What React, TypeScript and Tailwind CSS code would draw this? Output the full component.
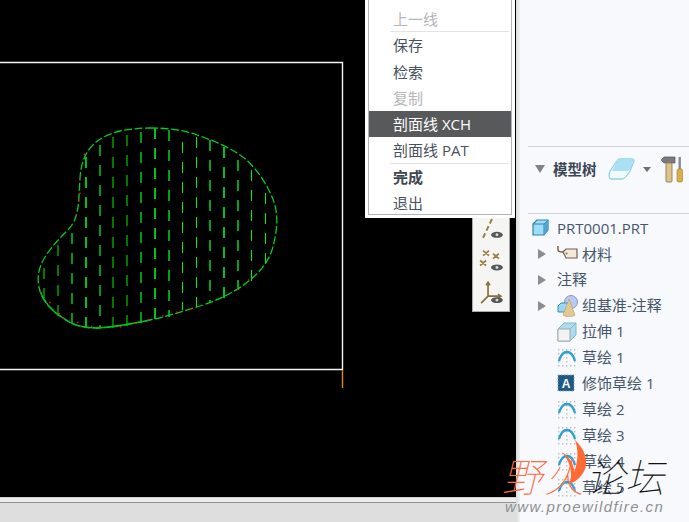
import React from "react";

const cjk = "font-['Open_Sans','Noto_Sans_CJK_SC','Liberation_Sans',sans-serif]";
const cjkOnly = "font-['Noto_Sans_CJK_SC','Liberation_Sans',sans-serif]";

const outline =
  "M150 128 C168 128 183 130 197 135 C212 140 227 146 240 155 C255 165 268 185 274 202 C278 214 278 230 272 250 C268 262 260 272 250 280 C236 292 216 301 197 307 C180 312 165 317 150 320 C135 323 118 327 97 328 C82 328 72 325 63 318 C52 311 44 303 40 291 C37 281 37 270 45 257 C50 249 56 242 63 235 C69 229 74 224 76 216 C79 207 79 195 80 178 C81 165 84 155 91 147 C98 139 108 134 120 131 C130 129 140 128 150 128 Z";

const hatch: [number, number, number, number, string][] = [
  [44, 268, 298, 1, "#00f000"],
  [58, 245, 317, 1, "#00f000"],
  [72, 233, 323, 1.4, "#00d820"],
  [86, 157, 328, 2, "#00c020"],
  [100, 145, 328, 1.5, "#00c820"],
  [113, 137, 328, 1, "#00f000"],
  [127, 135, 326, 1, "#00f000"],
  [141, 132, 324, 1.4, "#00d820"],
  [155, 128, 320, 2, "#00c020"],
  [169, 130, 317, 1.6, "#00c820"],
  [182.5, 142, 310, 1, "#00f000"],
  [196.5, 137, 307, 1, "#00f000"],
  [210, 140, 303, 1.6, "#00c820"],
  [224, 147, 298, 2, "#00c020"],
  [238, 160, 290, 1.6, "#00c820"],
  [251.5, 170, 283, 1, "#00f000"],
  [265.5, 193, 270, 1, "#00f000"],
];

function Drawing() {
  return (
    <svg width="516" height="497" viewBox="0 0 516 497" className="block">
      <path d="M0 62.5H342.5V369.5H0" fill="none" stroke="#f4f4f4" strokeWidth="1.4" />
      <path d="M342.5 370V388" stroke="#d98a00" strokeWidth="1.4" />
      {hatch.map(([x, a, b, w, c]) => (
        <line key={x} x1={x} x2={x} y1={a} y2={b} stroke={c} strokeWidth={w} strokeDasharray="11 9" />
      ))}
      <path d={outline} fill="none" stroke="#00d020" strokeWidth="1.3" strokeDasharray="8 2.5" />
      <path
        d="M150 320 C135 323 118 327 97 328 C82 328 72 325 63 318 C52 311 44 303 40 291"
        fill="none"
        stroke="#00c020"
        strokeWidth="1.4"
      />
      <path
        d="M80 178 L80 200 M40 291 L63 318 M76 216 L79 200 M84 155 L86 152 M63 318 L97 328 M120 327 L197 307 M237 290 L258 272"
        fill="none"
        stroke="#ff1010"
        strokeWidth="1.4"
        strokeDasharray="1.5 13"
      />
    </svg>
  );
}

function MenuRow({
  label,
  tone = "normal",
  sep = false,
}: {
  label: string;
  tone?: "normal" | "off" | "on" | "bold";
  sep?: boolean;
}) {
  const cls =
    tone === "on"
      ? "bg-[#58595b] text-white"
      : tone === "off"
        ? "text-[#b4b6b8]"
        : tone === "bold"
          ? "text-[#3d4650] font-bold"
          : "text-[#47525e]";
  return (
    <div>
      <div className={`h-[26.3px] pl-[24px] text-[15px] leading-[26px] ${cls}`}>{label}</div>
      {sep && <div className="h-px ml-[21px] mr-[2px] bg-[#e3e3e3] -mt-px relative" />}
    </div>
  );
}

function Menu() {
  return (
    <div className={`absolute left-[365px] -top-[2px] w-[150px] h-[220px] bg-white px-[3px] pb-[3px] ${cjk}`}>
      <div className="h-full border-x border-b border-[#b2b5b7] pt-[8px]">
        <MenuRow label="上一线" tone="off" sep />
        <MenuRow label="保存" />
        <MenuRow label="检索" />
        <MenuRow label="复制" tone="off" />
        <MenuRow label="剖面线 XCH" tone="on" />
        <MenuRow label="剖面线 PAT" sep />
        <MenuRow label="完成" tone="bold" />
        <MenuRow label="退出" />
      </div>
    </div>
  );
}

function Eye({ x, y }: { x: number; y: number }) {
  return (
    <g transform={`translate(${x} ${y})`}>
      <ellipse cx="6" cy="3" rx="6" ry="3" fill="#55585a" />
      <circle cx="6" cy="3" r="1.5" fill="#d8d8d8" />
    </g>
  );
}

function SideTools() {
  return (
    <div className="absolute left-[472px] top-[218px] w-[38px] h-[94px] bg-[#f5f6f4] border-x border-b border-[#a8aaab] flex flex-col items-center">
      <svg width="36" height="94" viewBox="0 0 36 94">
        <path d="M19 1 L9 22" stroke="#9a7f45" strokeWidth="2" strokeDasharray="5 3" />
        <Eye x={18} y={14} />
        <g stroke="#9a7f45" strokeWidth="1.8">
          <path d="M10 33l6 5M16 33l-6 5M20 36l6 5M26 36l-6 5M7 43l6 5M13 43l-6 5" />
        </g>
        <Eye x={18} y={47} />
        <g fill="none" stroke="#8a7038" strokeWidth="1.7">
          <path d="M15 66V79M15 79L27 79M15 79L8 86" />
          <path d="M13 68l2-3 2 3M25 77l3 2-3 2" />
        </g>
        <Eye x={18} y={80} />
      </svg>
    </div>
  );
}

function Cube() {
  return (
    <svg width="17" height="17" viewBox="0 0 17 17">
      <path d="M1 5 L5 1 H16 V11 L12 16 H1 Z" fill="#9fdcf5" stroke="#2e83b0" strokeWidth="1.2" />
      <path d="M1 5H12V16M12 5L16 1" fill="none" stroke="#2e83b0" strokeWidth="1" />
      <path d="M12 5L16 1V11L12 16Z" fill="#4ea6d0" />
    </svg>
  );
}

function Sketch() {
  return (
    <svg width="20" height="20" viewBox="0 0 20 20">
      <g fill="#bfc3c6">
        {[1, 5, 9, 13, 17].map((x) =>
          [2, 18].map((y) => <rect key={`${x}-${y}`} x={x} y={y} width="1.5" height="1.5" />),
        )}
        {[6, 10, 14].map((y) => (
          <React.Fragment key={y}>
            <rect x="1" y={y} width="1.5" height="1.5" />
            <rect x="9" y={y} width="1.5" height="1.5" />
            <rect x="17" y={y} width="1.5" height="1.5" />
          </React.Fragment>
        ))}
      </g>
      <path d="M2 14 C4 7 7 5 10 5 C13 5 16 7 18 14" fill="none" stroke="#2f9fd0" strokeWidth="2.4" />
    </svg>
  );
}

const icons: Record<string, React.ReactNode> = {
  cube: <Cube />,
  tag: (
    <svg width="21" height="16" viewBox="0 0 21 16">
      <path d="M1 0V4C1 6 3 6 6 6" fill="none" stroke="#7b5a25" strokeWidth="1.4" />
      <path d="M6 6 L9 3 H20 V12 H9 Z" fill="#f2e9dc" stroke="#6e5f58" strokeWidth="1.2" />
      <circle cx="9.5" cy="7.5" r="1" fill="#8a6a3a" />
    </svg>
  ),
  datum: (
    <svg width="22" height="22" viewBox="0 0 22 22">
      <circle cx="14" cy="7" r="6.5" fill="#b9c9ee" stroke="#8397c8" />
      <path d="M1 11 L4 8 H13 V17 H1 Z" fill="#9bd6f2" stroke="#3a8cba" />
      <path d="M12 4 L18 20 C15 22 8 22 6 20 Z" fill="#e3c894" stroke="#b79a62" strokeWidth="0.6" />
    </svg>
  ),
  extrude: (
    <svg width="20" height="20" viewBox="0 0 20 20">
      <path d="M1 7 L7 1 H19 V13 L13 19 H1 Z" fill="#a9dcef" stroke="#8cb6c6" />
      <path d="M1 7H13V19H1Z" fill="#f3f3f3" stroke="#a2a6a8" />
      <path d="M13 7L19 1" stroke="#8cb6c6" />
    </svg>
  ),
  sketch: <Sketch />,
  cosmetic: (
    <svg width="18" height="18" viewBox="0 0 18 18">
      <rect x="1" y="1" width="16" height="16" fill="#1f5a85" />
      <path d="M1 1h16v16H1z" fill="none" stroke="#7fa6c0" strokeDasharray="1.5 1.5" />
      <text x="9" y="14" textAnchor="middle" fontSize="12" fontWeight="700" fill="#fff" fontFamily="Liberation Sans">
        A
      </text>
    </svg>
  ),
};

function Arrow() {
  return <span className="w-0 h-0 border-y-[5px] border-y-transparent border-l-[8px] border-l-[#8b8d90]" />;
}

function Row({ label, icon, arrow, root }: { label: string; icon: string; arrow?: boolean; root?: boolean }) {
  return (
    <div className={`h-[25.9px] flex items-center text-[15px] whitespace-nowrap text-[#46566a] ${root ? "pl-[4px]" : "pl-[10px]"}`}>
      {!root && <span className="w-[19px] flex items-center">{arrow && <Arrow />}</span>}
      {icon && <span className="w-[25px] flex items-center">{icons[icon]}</span>}
      <span>{label}</span>
    </div>
  );
}

function Tree() {
  return (
    <div className={`pt-[1px] ${cjk}`}>
      <Row root label="PRT0001.PRT" icon="cube" />
      <Row label="材料" icon="tag" arrow />
      <Row label="注释" icon="" arrow />
      <Row label="组基准-注释" icon="datum" arrow />
      <Row label="拉伸 1" icon="extrude" />
      <Row label="草绘 1" icon="sketch" />
      <Row label="修饰草绘 1" icon="cosmetic" />
      <Row label="草绘 2" icon="sketch" />
      <Row label="草绘 3" icon="sketch" />
      <Row label="草绘 4" icon="sketch" />
      <Row label="草绘 5" icon="sketch" />
    </div>
  );
}

function Header() {
  return (
    <div className="h-[67px] flex items-center pb-[22px] pl-[7px] border-b border-[#d3d7da]">
      <span className="w-0 h-0 border-x-[5.5px] border-x-transparent border-t-[8px] border-t-[#818386]" />
      <span className={`ml-[8px] text-[14.5px] font-bold text-[#3b4654] ${cjkOnly}`}>模型树</span>
      <svg width="27" height="23" viewBox="0 0 27 23" className="ml-[11px]">
        <path d="M2 13 L9 3 Q10 1 12 1 H24 Q26 1 26 3 L22 13 Q17 21 14 21 H4 Q1 21 1 17 Z" fill="#f0fafd" stroke="#93d2e6" strokeWidth="1.3" />
        <path d="M9 3 Q10 1 12 1 H24 Q26 1 26 3 L22 11 Q21 13 19 13 H4 Z" fill="#a9e0f4" />
      </svg>
      <span className="ml-[8px] w-0 h-0 border-x-[4.5px] border-x-transparent border-t-[5px] border-t-[#6e7072]" />
      <svg width="24" height="27" viewBox="0 0 24 27" className="ml-[9px]">
        <path d="M1 4 L4 1 H15 V7 H4 Z" fill="#7c7a80" stroke="#55545a" strokeWidth="0.7" />
        <rect x="6" y="7" width="6" height="19" rx="1" fill="#dcc48c" stroke="#9c8450" />
        <rect x="18.5" y="1" width="2.4" height="12" fill="#8a8a8e" />
        <rect x="17" y="13" width="5.5" height="13" rx="1.5" fill="#dcae4a" stroke="#a07a20" strokeWidth="0.6" />
      </svg>
    </div>
  );
}

function Watermark() {
  return (
    <div className="absolute left-[500px] top-[440px] w-[189px] h-[82px] pointer-events-none">
      <svg width="189" height="60" viewBox="0 0 189 60" className="absolute left-0 top-0">
        <path d="M75 0 C90 14 90 32 74 42 C69 44 69 41 70 42 C77 28 80 14 75 0 Z" fill="#ff6a33" />
        <path d="M62 12 C72 18 76 30 74 38 C72 44 72 42 70 42 C73 32 70 22 62 12 Z" fill="#ff6a33" />
      </svg>
      <span className={`absolute left-[2px] top-[11px] text-[40px] leading-[48px] italic font-thin text-[#ff6b3d] tracking-[2px] ${cjkOnly}`}>
        野火
      </span>
      <span className={`absolute left-[86px] top-[11px] text-[39px] leading-[48px] italic font-thin text-[#111] ${cjkOnly}`}>
        论坛
      </span>
      <span className="absolute left-[5px] top-[58px] text-[15px] leading-[18px] italic tracking-[1.4px] whitespace-nowrap text-[#8f9092] font-['Liberation_Sans',sans-serif]">
        www.proewildfire.cn
      </span>
    </div>
  );
}

export default function App() {
  return (
    <div className="relative flex w-[689px] h-[522px] overflow-hidden bg-white">
      <div className="w-[516px] flex flex-col shrink-0">
        <div className="relative h-[497px] bg-black">
          <Drawing />
          <SideTools />
          <Menu />
        </div>
        <div className="h-[5px] bg-[#ececec] border-t border-[#d0d0d0]" />
        <div className="flex-1 bg-[#dedede] border-t border-[#8f8f8f]" />
      </div>
      <div className="flex-1 flex bg-[#f7f9fc]">
        <div className="w-[4px] bg-gradient-to-r from-[#d7dddd] to-[#eef1f3]" />
        <div className="flex-1 pl-[8px]">
          <div className="h-[147px] border-b border-[#d3d7da]" />
          <Header />
          <Tree />
        </div>
      </div>
      <Watermark />
    </div>
  );
}
